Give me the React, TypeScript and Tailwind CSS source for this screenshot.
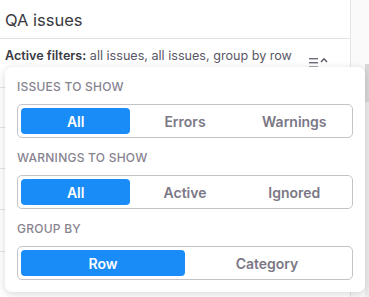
import React from "react";

function Segmented({ options, active }: { options: string[]; active: number }) {
  return (
    <div className="flex h-[34px] rounded-[5px] border border-[#c4c4c8] p-[3px]">
      {options.map((o, i) => (
        <div
          key={o}
          className={
            i === active
              ? "flex flex-1 items-center justify-center rounded-[4px] bg-[#1a8cf8] text-[14px] font-semibold text-white"
              : "flex flex-1 items-center justify-center text-[14px] font-semibold text-[#7b7886]"
          }
        >
          {o}
        </div>
      ))}
    </div>
  );
}

function Label({ children }: { children: React.ReactNode }) {
  return (
    <div className="mb-[9px] h-4 text-[12px] font-medium uppercase leading-4 tracking-[0.02em] text-[#87838f]">
      {children}
    </div>
  );
}

export default function App() {
  return (
    <div
      className="relative flex h-[297px] w-[369px] overflow-hidden bg-white"
      style={{ fontFamily: "Inter, 'Noto Sans', sans-serif" }}
    >
      <div className="flex w-[351px] flex-col border-r border-[#e6e6e6]">
        <div className="h-[39px] border-b border-[#e2e2e2] px-[5px] pt-[8px] text-[16.5px] leading-6 text-[#3a3a3f]">
          QA issues
        </div>
        <div className="flex h-[49px] border-b border-[#e6e6e6] px-[5px] pt-[9px]">
          <div className="flex-1 text-[12.6px] leading-4 text-[#5a5766]">
            <span className="font-semibold text-[#3a3a44]">Active filters:</span> all issues, all issues, group by row
          </div>
          <div className="mr-[17px] mt-[9px] flex h-[12px] items-start gap-[1px]">
            <svg width="10" height="11" viewBox="0 0 10 11">
              <rect x="0" y="1" width="9" height="1.4" fill="#6e6a7c" />
              <rect x="0" y="5" width="9" height="1.4" fill="#6e6a7c" />
              <rect x="0" y="9" width="9" height="1.4" fill="#a8a4b4" />
            </svg>
            <svg width="8" height="6" viewBox="0 0 8 6">
              <path d="M1 5 L4 1.8 L7 5" stroke="#5f5b6d" strokeWidth="1.5" fill="none" />
            </svg>
          </div>
        </div>
        <div className="h-[40px] border-b border-[#e6e6e6]" />
        <div className="h-[41px] border-b border-[#e6e6e6]" />
        <div className="h-[41px] border-b border-[#e6e6e6]" />
        <div className="h-[42px] border-b border-[#e6e6e6]" />
      </div>
      <div className="flex flex-1 justify-end bg-[#fafafa]">
        <div className="mt-[64px] flex w-[4px] flex-col">
          <div className="h-[38px] bg-[#d8d8d8]" />
          <div className="flex-1 bg-[#ececec]" />
        </div>
      </div>

      <div className="absolute left-[5px] top-[67px] w-[360px] rounded-[7px] bg-white px-[12px] pb-[12px] pt-[12px] shadow-[0_2px_8px_rgba(0,0,0,0.16)]">
        <Label>Issues to show</Label>
        <Segmented options={["All", "Errors", "Warnings"]} active={0} />
        <div className="h-[12px]" />
        <Label>Warnings to show</Label>
        <Segmented options={["All", "Active", "Ignored"]} active={0} />
        <div className="h-[12px]" />
        <Label>Group by</Label>
        <Segmented options={["Row", "Category"]} active={0} />
      </div>
    </div>
  );
}
